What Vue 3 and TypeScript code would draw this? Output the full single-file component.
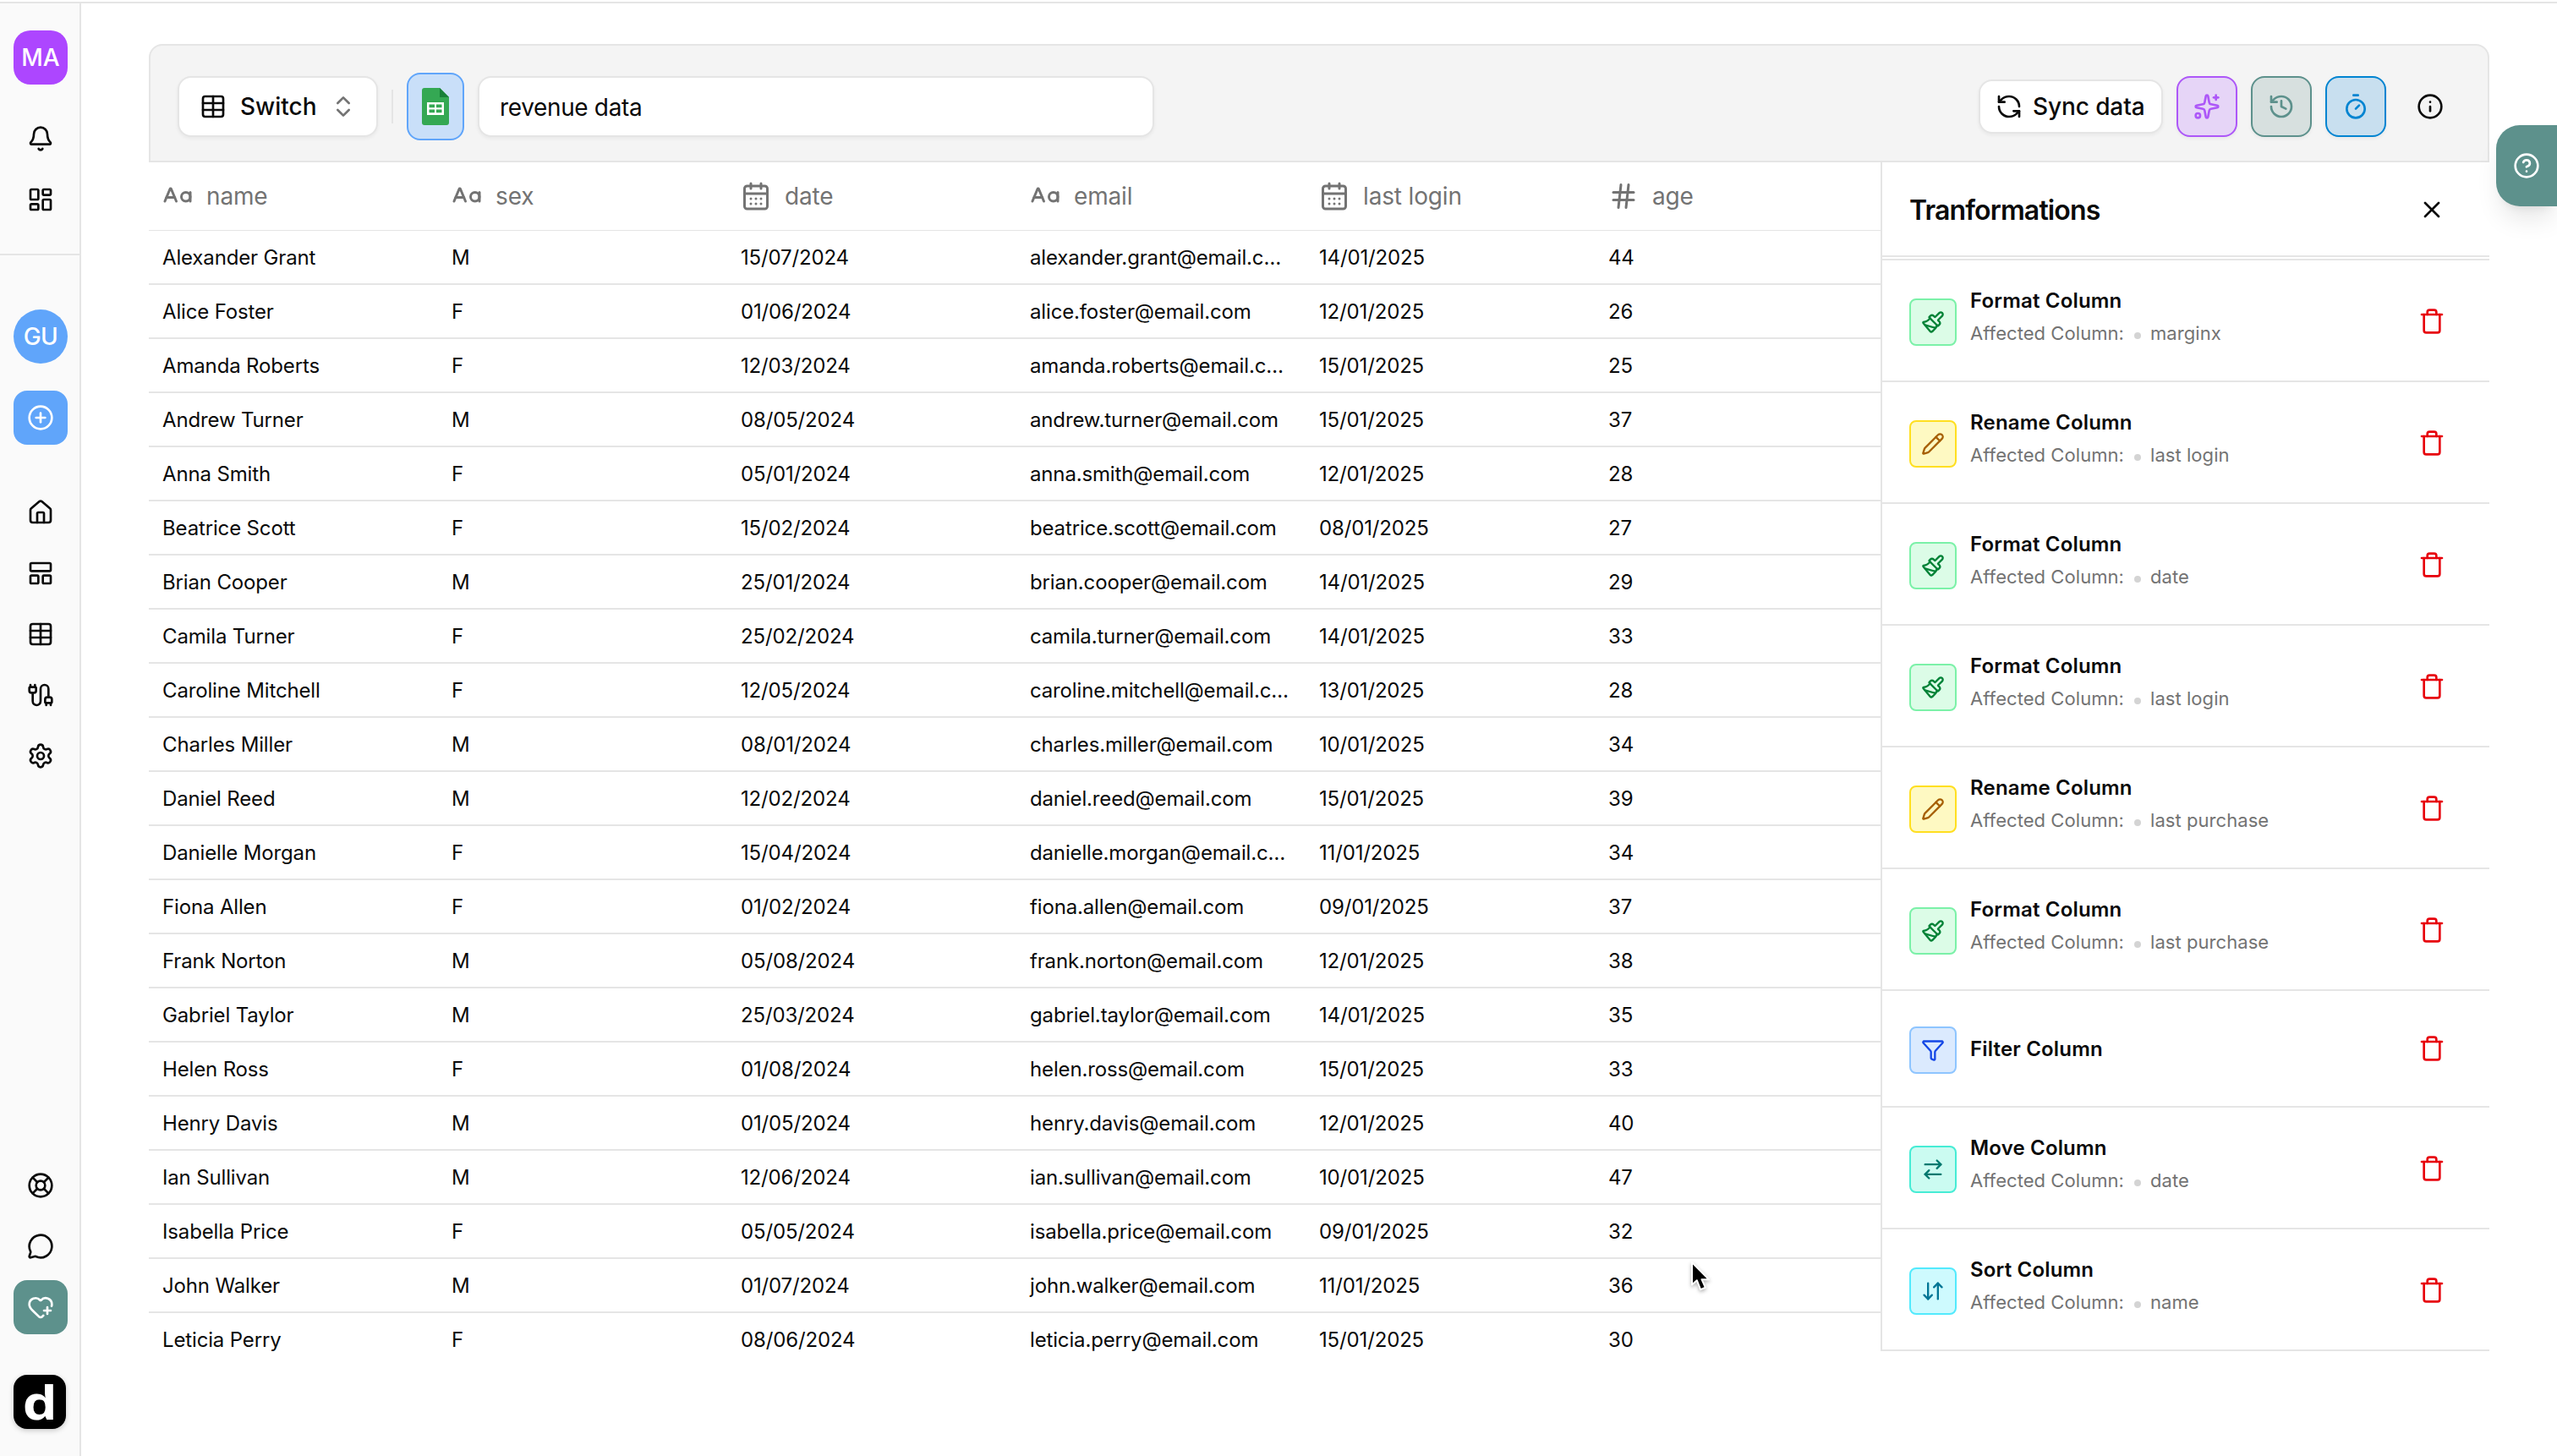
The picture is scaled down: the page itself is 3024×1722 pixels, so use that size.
<script setup lang="ts">
import { h, type FunctionalComponent } from 'vue'

type Shape = { t: string; a: Record<string, string | number> }

const p = (d: string): Shape => ({ t: 'path', a: { d } })
const c = (cx: number, cy: number, r: number): Shape => ({ t: 'circle', a: { cx, cy, r } })
const r = (x: number, y: number, width: number, height: number, rx = 1): Shape => ({
  t: 'rect',
  a: { x, y, width, height, rx },
})

const icons: Record<string, Shape[]> = {
  bell: [
    p('M10.268 21a2 2 0 0 0 3.464 0'),
    p('M3.262 15.326A1 1 0 0 0 4 17h16a1 1 0 0 0 .74-1.673C19.41 13.956 18 12.499 18 8A6 6 0 0 0 6 8c0 4.499-1.411 5.956-2.738 7.326'),
  ],
  dashboard: [r(3, 3, 7, 9), r(14, 3, 7, 5), r(14, 12, 7, 9), r(3, 16, 7, 5)],
  plus: [c(12, 12, 10), p('M8 12h8'), p('M12 8v8')],
  house: [
    p('M15 21v-8a1 1 0 0 0-1-1h-4a1 1 0 0 0-1 1v8'),
    p('M3 10a2 2 0 0 1 .709-1.528l7-6a2 2 0 0 1 2.582 0l7 6A2 2 0 0 1 21 10v9a2 2 0 0 1-2 2H5a2 2 0 0 1-2-2z'),
  ],
  panels: [r(3, 3, 18, 7), r(3, 14, 7, 7), r(14, 14, 7, 7)],
  table: [p('M12 3v18'), r(3, 3, 18, 18, 2), p('M3 9h18'), p('M3 15h18')],
  cable: [
    p('M17 19a1 1 0 0 1-1-1v-2a2 2 0 0 1 2-2h2a2 2 0 0 1 2 2v2a1 1 0 0 1-1 1z'),
    p('M17 21v-2'),
    p('M19 14V6.5a1 1 0 0 0-7 0v11a1 1 0 0 1-7 0V10'),
    p('M21 21v-2'),
    p('M3 5V3'),
    p('M4 10a2 2 0 0 1-2-2V6a1 1 0 0 1 1-1h4a1 1 0 0 1 1 1v2a2 2 0 0 1-2 2z'),
    p('M7 5V3'),
  ],
  settings: [
    p('M9.671 4.136a2.34 2.34 0 0 1 4.659 0 2.34 2.34 0 0 0 3.319 1.915 2.34 2.34 0 0 1 2.33 4.033 2.34 2.34 0 0 0 0 3.831 2.34 2.34 0 0 1-2.33 4.033 2.34 2.34 0 0 0-3.319 1.915 2.34 2.34 0 0 1-4.659 0 2.34 2.34 0 0 0-3.32-1.915 2.34 2.34 0 0 1-2.33-4.033 2.34 2.34 0 0 0 0-3.831A2.34 2.34 0 0 1 6.35 6.051a2.34 2.34 0 0 0 3.319-1.915'),
    c(12, 12, 3),
  ],
  lifebuoy: [
    c(12, 12, 10),
    p('m4.93 4.93 4.24 4.24'),
    p('m14.83 9.17 4.24-4.24'),
    p('m14.83 14.83 4.24 4.24'),
    p('m9.17 14.83-4.24 4.24'),
    c(12, 12, 4),
  ],
  message: [p('M2.992 16.342a2 2 0 0 1 .094 1.167l-1.065 3.29a1 1 0 0 0 1.236 1.168l3.413-.998a2 2 0 0 1 1.099.092 10 10 0 1 0-4.777-4.719')],
  heart: [
    p('m14.479 19.374-.971.939a2 2 0 0 1-3 .019L5 15c-1.5-1.5-3-3.2-3-5.5a5.5 5.5 0 0 1 9.591-3.676.56.56 0 0 0 .818 0A5.49 5.49 0 0 1 22 9.5a5.2 5.2 0 0 1-.219 1.49'),
    p('M15 15h6'),
    p('M18 12v6'),
  ],
  chevrons: [p('m7 15 5 5 5-5'), p('m7 9 5-5 5 5')],
  refresh: [
    p('M21 12a9 9 0 0 0-9-9 9.75 9.75 0 0 0-6.74 2.74L3 8'),
    p('M3 3v5h5'),
    p('M3 12a9 9 0 0 0 9 9 9.75 9.75 0 0 0 6.74-2.74L21 16'),
    p('M16 16h5v5'),
  ],
  sparkles: [
    p('M11.017 2.814a1 1 0 0 1 1.966 0l1.051 5.558a2 2 0 0 0 1.594 1.594l5.558 1.051a1 1 0 0 1 0 1.966l-5.558 1.051a2 2 0 0 0-1.594 1.594l-1.051 5.558a1 1 0 0 1-1.966 0l-1.051-5.558a2 2 0 0 0-1.594-1.594l-5.558-1.051a1 1 0 0 1 0-1.966l5.558-1.051a2 2 0 0 0 1.594-1.594z'),
    p('M20 2v4'),
    p('M22 4h-4'),
    c(4, 20, 2),
  ],
  history: [p('M3 12a9 9 0 1 0 9-9 9.75 9.75 0 0 0-6.74 2.74L3 8'), p('M3 3v5h5'), p('M12 7v5l4 2')],
  timer: [p('M10 2h4'), p('m12 14 3-3'), c(12, 14, 8)],
  info: [c(12, 12, 10), p('M12 16v-4'), p('M12 8h.01')],
  help: [c(12, 12, 10), p('M9.09 9a3 3 0 0 1 5.83 1c0 2-3 3-3 3'), p('M12 17h.01')],
  close: [p('M18 6 6 18'), p('m6 6 12 12')],
  text: [p('m2 16 4.039-9.69a.5.5 0 0 1 .923 0L11 16'), p('M22 9v7'), p('M3.304 13h6.392'), c(18.5, 12.5, 3.5)],
  calendar: [
    p('M8 2v4'),
    p('M16 2v4'),
    r(3, 4, 18, 18, 2),
    p('M3 10h18'),
    p('M8 14h.01'),
    p('M12 14h.01'),
    p('M16 14h.01'),
    p('M8 18h.01'),
    p('M12 18h.01'),
    p('M16 18h.01'),
  ],
  hash: [p('M4 9h16'), p('M4 15h16'), p('M10 3 8 21'), p('M16 3l-2 18')],
  format: [
    p('m14.622 17.897-10.68-2.913'),
    p('M18.376 2.622a1 1 0 1 1 3.002 3.002L17.36 9.643a.5.5 0 0 0 0 .707l.944.944a2.41 2.41 0 0 1 0 3.408l-.944.944a.5.5 0 0 1-.707 0L8.354 7.348a.5.5 0 0 1 0-.707l.944-.944a2.41 2.41 0 0 1 3.408 0l.944.944a.5.5 0 0 0 .707 0z'),
    p('M9 8c-1.804 2.71-3.97 3.46-6.583 3.948a.507.507 0 0 0-.302.819l7.32 8.883a1 1 0 0 0 1.185.204C12.735 20.405 16 16.792 16 15'),
  ],
  rename: [
    p('M21.174 6.812a1 1 0 0 0-3.986-3.987L3.842 16.174a2 2 0 0 0-.5.83l-1.321 4.352a.5.5 0 0 0 .623.622l4.353-1.32a2 2 0 0 0 .83-.497z'),
    p('m15 5 4 4'),
  ],
  filter: [p('M10 20a1 1 0 0 0 .553.895l2 1A1 1 0 0 0 14 21v-7a2 2 0 0 1 .517-1.341L21.74 4.67A1 1 0 0 0 21 3H3a1 1 0 0 0-.742 1.67l7.225 7.989A2 2 0 0 1 10 14z')],
  move: [p('m16 3 4 4-4 4'), p('M20 7H4'), p('m8 21-4-4 4-4'), p('M4 17h16')],
  sort: [p('m3 16 4 4 4-4'), p('M7 20V4'), p('m21 8-4-4-4 4'), p('M17 4v16')],
  trash: [p('M19 6v14a2 2 0 0 1-2 2H7a2 2 0 0 1-2-2V6'), p('M3 6h18'), p('M8 6V4a2 2 0 0 1 2-2h4a2 2 0 0 1 2 2v2')],
}

// Renders one stroke icon from the set above on a 24-unit grid.
const Icon: FunctionalComponent<{ name: string; size?: number }> = (props) =>
  h(
    'svg',
    {
      viewBox: '0 0 24 24',
      width: props.size ?? 32,
      height: props.size ?? 32,
      fill: 'none',
      stroke: 'currentColor',
      'stroke-width': 2,
      'stroke-linecap': 'round',
      'stroke-linejoin': 'round',
    },
    icons[props.name].map((s) => h(s.t, s.a)),
  )
Icon.props = ['name', 'size']

const topNav = ['bell', 'dashboard']
const mainNav = ['house', 'panels', 'table', 'cable', 'settings']
const bottomNav = ['lifebuoy', 'message']

const columns = [
  { icon: 'text', label: 'name' },
  { icon: 'text', label: 'sex' },
  { icon: 'calendar', label: 'date' },
  { icon: 'text', label: 'email' },
  { icon: 'calendar', label: 'last login' },
  { icon: 'hash', label: 'age' },
]

const rows: string[][] = [
  ['Alexander Grant', 'M', '15/07/2024', 'alexander.grant@email.com', '14/01/2025', '44'],
  ['Alice Foster', 'F', '01/06/2024', 'alice.foster@email.com', '12/01/2025', '26'],
  ['Amanda Roberts', 'F', '12/03/2024', 'amanda.roberts@email.com', '15/01/2025', '25'],
  ['Andrew Turner', 'M', '08/05/2024', 'andrew.turner@email.com', '15/01/2025', '37'],
  ['Anna Smith', 'F', '05/01/2024', 'anna.smith@email.com', '12/01/2025', '28'],
  ['Beatrice Scott', 'F', '15/02/2024', 'beatrice.scott@email.com', '08/01/2025', '27'],
  ['Brian Cooper', 'M', '25/01/2024', 'brian.cooper@email.com', '14/01/2025', '29'],
  ['Camila Turner', 'F', '25/02/2024', 'camila.turner@email.com', '14/01/2025', '33'],
  ['Caroline Mitchell', 'F', '12/05/2024', 'caroline.mitchell@email.com', '13/01/2025', '28'],
  ['Charles Miller', 'M', '08/01/2024', 'charles.miller@email.com', '10/01/2025', '34'],
  ['Daniel Reed', 'M', '12/02/2024', 'daniel.reed@email.com', '15/01/2025', '39'],
  ['Danielle Morgan', 'F', '15/04/2024', 'danielle.morgan@email.com', '11/01/2025', '34'],
  ['Fiona Allen', 'F', '01/02/2024', 'fiona.allen@email.com', '09/01/2025', '37'],
  ['Frank Norton', 'M', '05/08/2024', 'frank.norton@email.com', '12/01/2025', '38'],
  ['Gabriel Taylor', 'M', '25/03/2024', 'gabriel.taylor@email.com', '14/01/2025', '35'],
  ['Helen Ross', 'F', '01/08/2024', 'helen.ross@email.com', '15/01/2025', '33'],
  ['Henry Davis', 'M', '01/05/2024', 'henry.davis@email.com', '12/01/2025', '40'],
  ['Ian Sullivan', 'M', '12/06/2024', 'ian.sullivan@email.com', '10/01/2025', '47'],
  ['Isabella Price', 'F', '05/05/2024', 'isabella.price@email.com', '09/01/2025', '32'],
  ['John Walker', 'M', '01/07/2024', 'john.walker@email.com', '11/01/2025', '36'],
  ['Leticia Perry', 'F', '08/06/2024', 'leticia.perry@email.com', '15/01/2025', '30'],
]

const steps: { kind: string; title: string; column?: string }[] = [
  { kind: 'format', title: 'Format Column', column: 'marginx' },
  { kind: 'rename', title: 'Rename Column', column: 'last login' },
  { kind: 'format', title: 'Format Column', column: 'date' },
  { kind: 'format', title: 'Format Column', column: 'last login' },
  { kind: 'rename', title: 'Rename Column', column: 'last purchase' },
  { kind: 'format', title: 'Format Column', column: 'last purchase' },
  { kind: 'filter', title: 'Filter Column' },
  { kind: 'move', title: 'Move Column', column: 'date' },
  { kind: 'sort', title: 'Sort Column', column: 'name' },
]
</script>

<template>
  <div class="app">
    <aside class="sidebar">
      <div class="account">
        <div class="tile avatar-user">MA</div>
        <nav class="nav">
          <a v-for="n in topNav" :key="n" class="nav-item"><Icon :name="n" /></a>
        </nav>
      </div>
      <div class="workspace">
        <div class="tile avatar-team">GU</div>
        <button class="tile add"><Icon name="plus" /></button>
        <nav class="nav">
          <a v-for="n in mainNav" :key="n" class="nav-item"><Icon :name="n" /></a>
        </nav>
      </div>
      <div class="footer">
        <nav class="nav">
          <a v-for="n in bottomNav" :key="n" class="nav-item"><Icon :name="n" /></a>
        </nav>
        <button class="tile favorite"><Icon name="heart" /></button>
        <div class="logo"><span>d</span></div>
      </div>
    </aside>

    <main class="main">
      <header class="toolbar">
        <button class="switch">
          <Icon name="table" />
          <span>Switch</span>
          <Icon name="chevrons" class="muted" />
        </button>
        <div class="separator"></div>
        <div class="source">
          <svg width="32" height="44" viewBox="0 0 32 44">
            <path d="M3 0h18l11 11v30a3 3 0 0 1-3 3H3a3 3 0 0 1-3-3V3a3 3 0 0 1 3-3z" fill="#34a853" />
            <path d="M21 0l11 11H21z" fill="#188038" />
            <path d="M6 17h20v15H6zM8.500 19.500v3.700h6.500v-3.700zM17 19.500v3.700h6.500v-3.700zM8.500 25.500v3.700h6.500v-3.700zM17 25.500v3.700h6.500v-3.700z" fill="#fff" fill-rule="evenodd" />
          </svg>
        </div>
        <div class="name-input">revenue data</div>
        <div class="actions">
          <button class="sync"><Icon name="refresh" /><span>Sync data</span></button>
          <button class="square ai"><Icon name="sparkles" /></button>
          <button class="square past"><Icon name="history" /></button>
          <button class="square schedule"><Icon name="timer" /></button>
          <button class="square plain"><Icon name="info" /></button>
        </div>
      </header>

      <div class="content">
        <section class="grid">
          <div class="grid-head">
            <div v-for="col in columns" :key="col.label" class="head-cell">
              <Icon :name="col.icon" :size="36" /><span>{{ col.label }}</span>
            </div>
          </div>
          <div v-for="row in rows" :key="row[0]" class="grid-row">
            <div v-for="(cell, i) in row" :key="i" class="cell">{{ cell }}</div>
          </div>
        </section>

        <section class="panel">
          <div class="panel-head">
            <h2>Tranformations</h2>
            <Icon name="close" />
          </div>
          <div class="steps">
            <div v-for="(s, i) in steps" :key="i" class="step" :class="{ single: !s.column }">
              <div class="badge" :class="s.kind"><Icon :name="s.kind" :size="28" /></div>
              <div class="info">
                <div class="title">{{ s.title }}</div>
                <div v-if="s.column" class="affected">
                  <span>Affected Column:</span><i class="dot"></i><span>{{ s.column }}</span>
                </div>
              </div>
              <Icon name="trash" class="remove" />
            </div>
          </div>
        </section>
      </div>
    </main>

    <button class="help-tab"><Icon name="help" /></button>

    <svg class="cursor" width="28" height="40" viewBox="0 0 28 40">
      <path d="M5 2v26.500l5.800-5.300 4.300 10.900 5.800-2.300-4.400-9.600H25z" fill="#000" stroke="#fff" stroke-width="2" stroke-linejoin="round" />
    </svg>
  </div>
</template>

<style>
body {
  margin: 0;
  background: #fff;
}
</style>

<style scoped>
.app {
  position: relative;
  box-sizing: border-box;
  display: flex;
  width: 3024px;
  height: 1720px;
  margin-top: 2px;
  overflow: hidden;
  border-top: 2px solid #e5e5e5;
  background: #fff;
  color: #0a0a0a;
  font-family: Inter, 'Liberation Sans', sans-serif;
  font-size: 24px;
}
.app * {
  box-sizing: border-box;
}
.app svg {
  display: block;
  flex: none;
}
button {
  font: inherit;
  color: inherit;
  padding: 0;
  margin: 0;
  border: 0;
  background: none;
}

.sidebar {
  display: flex;
  flex-direction: column;
  width: 96px;
  flex: none;
  background: #fafafa;
  border-right: 2px solid #e5e5e5;
}
.account {
  height: 298px;
  padding: 32px 0 0 16px;
  border-bottom: 2px solid #e5e5e5;
}
.workspace {
  padding: 64px 0 0 16px;
}
.footer {
  margin-top: auto;
  padding: 0 0 32px 16px;
}
.nav {
  display: flex;
  flex-direction: column;
  gap: 8px;
  width: 64px;
}
.nav-item {
  display: flex;
  align-items: center;
  justify-content: center;
  height: 64px;
}
.tile {
  display: flex;
  align-items: center;
  justify-content: center;
  width: 64px;
  height: 64px;
  border-radius: 16px;
  color: #fff;
  font-size: 28px;
}
.avatar-user {
  background: #ad46ff;
  border-radius: 20px;
  font-weight: 500;
  margin-bottom: 32px;
}
.avatar-team {
  background: #60a5fa;
  border-radius: 50%;
  font-weight: 500;
  letter-spacing: -0.5px;
}
.add {
  background: #60a5fa;
  margin: 32px 0 48px;
}
.favorite {
  background: #5d918c;
  margin-top: 8px;
}
.logo {
  display: flex;
  align-items: center;
  justify-content: center;
  width: 62px;
  height: 64px;
  margin-top: 48px;
  border-radius: 16px;
  background: #000;
  color: #fff;
  box-shadow: 0 2px 6px rgba(0, 0, 0, 0.2);
  font: 700 55px/64px 'Open Sans', sans-serif;
}
.logo span {
  transform: scaleX(1.18);
}

.main {
  width: 2768px;
  margin: 48px 0 0 80px;
}
.toolbar {
  display: flex;
  align-items: center;
  height: 140px;
  padding: 8px 32px 0;
  border: 2px solid #e5e5e5;
  border-radius: 16px 16px 0 0;
  background: #f4f4f4;
  font-size: 28px;
}
.switch {
  display: flex;
  align-items: center;
  width: 237px;
  height: 72px;
  padding-left: 24px;
  border: 2px solid #e5e5e5;
  border-radius: 16px;
  background: #fff;
  box-shadow: 0 2px 4px rgba(0, 0, 0, 0.05);
  font-weight: 500;
}
.switch span {
  width: 122px;
  padding-left: 16px;
  text-align: left;
}
.muted {
  color: #737373;
}
.separator {
  width: 2px;
  height: 40px;
  margin: 0 16px;
  background: #e5e5e5;
}
.source {
  display: flex;
  align-items: center;
  justify-content: center;
  width: 68px;
  height: 80px;
  border: 2px solid #60a5fa;
  border-radius: 16px;
  background: #c9dff9;
}
.name-input {
  width: 800px;
  height: 72px;
  margin-left: 16px;
  padding-left: 24px;
  border: 2px solid #e5e5e5;
  border-radius: 16px;
  background: #fff;
  box-shadow: 0 2px 4px rgba(0, 0, 0, 0.05);
  line-height: 70px;
  letter-spacing: -0.35px;
}
.actions {
  display: flex;
  align-items: center;
  gap: 16px;
  margin-left: auto;
}
.sync {
  display: flex;
  align-items: center;
  width: 218px;
  height: 64px;
  padding-left: 18px;
  gap: 12px;
  border: 2px solid #e5e5e5;
  border-radius: 16px;
  background: #fff;
  box-shadow: 0 2px 4px rgba(0, 0, 0, 0.05);
  font-weight: 500;
  letter-spacing: -0.1px;
  white-space: nowrap;
}
.square {
  display: flex;
  align-items: center;
  justify-content: center;
  width: 72px;
  height: 72px;
  border: 2px solid currentColor;
  border-radius: 16px;
  box-shadow: 0 2px 4px rgba(0, 0, 0, 0.05);
}
.ai {
  color: #ad57f8;
  background: #e6d5f7;
}
.past {
  color: #5d918c;
  background: #d7e0df;
}
.schedule {
  color: #0084d1;
  background: #c8dfef;
}
.plain {
  border-color: transparent;
  box-shadow: none;
}

.content {
  display: flex;
  height: 1406px;
}
.grid {
  width: 2048px;
  overflow: hidden;
}
.grid-head {
  display: flex;
  height: 81px;
  border-bottom: 1px solid #e5e5e5;
}
.head-cell {
  display: flex;
  align-items: center;
  gap: 16px;
  width: 342px;
  flex: none;
  padding: 0 16px;
  color: #737373;
  font-size: 28px;
  letter-spacing: -0.15px;
}
.grid-row {
  display: flex;
  height: 64px;
  border-bottom: 2px solid #e5e5e5;
}
.grid-row:last-child {
  border-bottom: 0;
}
.cell {
  width: 342px;
  flex: none;
  padding: 1px 16px 0;
  line-height: 62px;
  letter-spacing: -0.15px;
  white-space: nowrap;
  overflow: hidden;
  text-overflow: ellipsis;
}

.panel {
  display: flex;
  flex-direction: column;
  width: 720px;
  border-left: 2px solid #e5e5e5;
}
.panel-head {
  display: flex;
  align-items: center;
  justify-content: space-between;
  height: 112px;
  padding: 2px 52px 0 32px;
  border-bottom: 2px solid #e5e5e5;
}
h2 {
  margin: 0;
  font-size: 32px;
  font-weight: 600;
  letter-spacing: -0.85px;
}
.steps {
  margin-top: 2px;
  border-top: 2px solid #e5e5e5;
}
.step {
  display: flex;
  align-items: center;
  height: 144px;
  padding: 0 52px 0 32px;
  border-bottom: 2px solid #e5e5e5;
}
.step.single {
  height: 138px;
}
.badge {
  display: flex;
  align-items: center;
  justify-content: center;
  width: 56px;
  height: 56px;
  margin-top: 4px;
  border: 2px solid;
  border-radius: 8px;
}
.format {
  color: #008236;
  background: #dcfce7;
  border-color: #7bf1a8;
}
.rename {
  color: #a65f00;
  background: #fef9c2;
  border-color: #ffdf20;
}
.filter {
  color: #1447e6;
  background: #dbeafe;
  border-color: #8ec5ff;
}
.move {
  color: #00786f;
  background: #cbfbf1;
  border-color: #46ecd5;
}
.sort {
  color: #007595;
  background: #cefafe;
  border-color: #53eafd;
}
.info {
  flex: 1;
  margin-left: 16px;
}
.title {
  font-weight: 600;
  line-height: 32px;
  letter-spacing: 0.17px;
}
.single .title {
  margin-top: 2px;
}
.affected {
  display: flex;
  align-items: center;
  margin-top: 8px;
  margin-bottom: 10px;
  color: #737373;
  font-size: 22px;
  line-height: 28px;
  letter-spacing: 0.06px;
}
.dot {
  width: 8px;
  height: 8px;
  margin: 5px 11px 0 12px;
  border-radius: 50%;
  background: #d4d4d4;
}
.remove {
  margin-top: 2px;
  color: #e7000b;
}
.single .remove {
  margin-top: 0;
}

.help-tab {
  position: absolute;
  top: 144px;
  right: 0;
  display: flex;
  align-items: center;
  justify-content: center;
  width: 72px;
  height: 96px;
  border-radius: 28px 0 0 28px;
  background: #5d918c;
  color: #fff;
  box-shadow: 0 20px 30px -6px rgba(0, 0, 0, 0.1), 0 8px 12px -8px rgba(0, 0, 0, 0.1);
}
.cursor {
  position: absolute;
  left: 1996px;
  top: 1487px;
  filter: drop-shadow(0 2px 2px rgba(0, 0, 0, 0.3));
}
</style>
